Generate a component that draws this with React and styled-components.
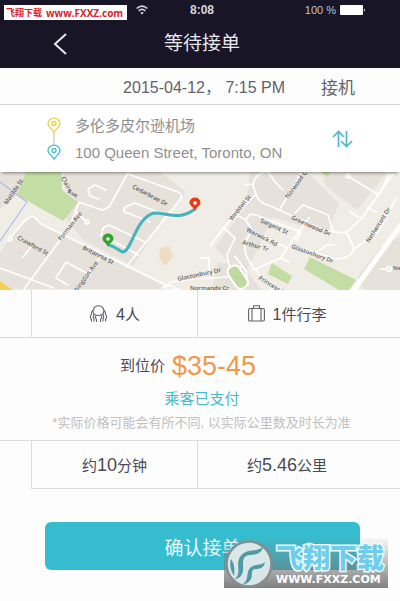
import React from 'react';
import styled, { createGlobalStyle } from 'styled-components';

const GlobalStyle = createGlobalStyle`
  * {
    box-sizing: border-box;
  }

  body {
    margin: 0;
    background: #fdfdfd;
    color: #4a4a55;
    font-family: 'Liberation Sans', 'Noto Sans CJK SC', sans-serif;
  }
`;

const Page = styled.div`
  position: relative;
  padding-bottom: 31px;
`;

const Header = styled.header`
  background: #171526;
  color: #e8e8ee;
`;

const StatusBar = styled.div`
  display: grid;
  grid-template-columns: 54px auto 1fr;
  align-items: center;
  height: 20px;
  padding: 0 34px 0 136px;
  font-size: 12px;
`;

const Clock = styled.span`
  font-weight: 700;
  color: #d5d5dd;
`;

const Battery = styled.div`
  display: flex;
  align-items: center;
  justify-content: flex-end;
  gap: 4px;
  font-size: 11px;
  white-space: nowrap;
  color: #c4c4cc;
`;

const NavBar = styled.div`
  display: grid;
  grid-template-columns: 45px 1fr 45px;
  align-items: center;
  height: 48px;
  padding: 0 35px 0 39px;
`;

const BackButton = styled.button`
  display: flex;
  padding: 12px 14px;
  border: 0;
  background: none;
  color: inherit;
  cursor: pointer;
`;

const Title = styled.h1`
  margin: 0;
  font-size: 19px;
  font-weight: 400;
  line-height: 24px;
  text-align: center;
`;

const DateRow = styled.div`
  display: flex;
  justify-content: flex-end;
  align-items: center;
  gap: 36px;
  height: 37px;
  padding-right: 45px;
  border-bottom: 1px solid #d4d4d4;
  font-size: 16px;
  color: #62636b;
`;

const TripType = styled.span`
  font-size: 17px;
`;

const Route = styled.section`
  position: relative;
  display: flex;
  align-items: center;
  height: 67px;
  padding: 0 47px;
  background: #fff;
  box-shadow: 0 3px 3px -2px rgba(0, 0, 0, 0.45);
`;

const Places = styled.div`
  flex: 1;
  display: flex;
  flex-direction: column;
  padding-left: 14px;
  font-size: 15px;
  line-height: 27px;
  color: #8f8f8f;
`;

const SwapButton = styled.button`
  display: flex;
  padding: 0;
  border: 0;
  background: none;
  cursor: pointer;
`;

const Map = styled.svg`
  display: block;
  width: 100%;
  height: 118px;
`;

const Cells = styled.div`
  display: grid;
  grid-template-columns: 31fr 166fr 203fr;
  height: ${props => (props.$top ? '49px' : '48px')};
  border-top: ${props => (props.$top ? '1px solid #dcdcdc' : '0')};
  border-bottom: ${props => (props.$top ? '0' : '1px solid #dcdcdc')};
`;

const Cell = styled.div`
  display: flex;
  align-items: center;
  justify-content: center;
  gap: 8px;
  padding-right: ${props => (props.$last ? '24px' : '0')};
  border-left: 1px solid #dcdcdc;
  border-bottom: ${props => (props.$underlined ? '1px solid #dcdcdc' : '0')};
  font-size: 15px;
`;

const Amount = styled.span`
  font-size: ${props => (props.$large ? '18px' : '16px')};
`;

const PriceBox = styled.section`
  display: flex;
  flex-direction: column;
  align-items: center;
  padding: 11px 0 5px;
`;

const PriceLine = styled.div`
  display: flex;
  align-items: center;
  gap: 7px;
  padding-right: 24px;
  font-size: 15px;
  line-height: 34px;
`;

const Price = styled.strong`
  font-size: 27px;
  font-weight: 400;
  color: #f0984a;
`;

const Paid = styled.p`
  margin: 4px 0 0;
  padding-left: 4px;
  font-size: 15px;
  line-height: 24px;
  color: #43bccb;
`;

const Note = styled.p`
  margin: 0;
  padding-left: 3px;
  font-size: 13px;
  line-height: 24px;
  color: #c0c0c0;
`;

const Actions = styled.div`
  padding: 33px 40px 0 45px;
`;

const ConfirmButton = styled.button`
  width: 100%;
  height: 48px;
  border: 0;
  border-radius: 6px;
  background: #35bdcf;
  color: #eefafc;
  font-family: inherit;
  font-size: 19px;
  cursor: pointer;
`;

const SiteTag = styled.div`
  position: absolute;
  top: 5px;
  left: 4px;
  display: flex;
  align-items: center;
  gap: 4px;
  height: 15px;
  padding: 0 4px 0 2px;
  background: #fff;
  color: #d8232a;
  font-family: 'Noto Sans CJK SC', sans-serif;
  font-size: 9px;
  font-weight: 700;
  white-space: nowrap;
`;

const SiteUrl = styled.span`
  font-family: 'Open Sans', sans-serif;
  font-size: 10px;
`;

const SiteBadge = styled.div`
  position: absolute;
  right: 12px;
  bottom: 13px;
  display: flex;
  align-items: center;
  height: 50px;
  width: 164px;
  background: linear-gradient(rgba(150, 150, 150, 0.05), rgba(115, 115, 115, 0.9));
  pointer-events: none;
`;

const BadgeText = styled.div`
  display: flex;
  flex-direction: column;
  padding: 2px 0 0 3px;
  white-space: nowrap;
`;

const BadgeName = styled.span`
  font-family: 'Noto Sans CJK SC', sans-serif;
  font-size: 27px;
  font-weight: 900;
  line-height: 32px;
  color: #6fcdec;
  -webkit-text-stroke: 3px #effafd;
  paint-order: stroke fill;
`;

const BadgeUrl = styled.span`
  font-family: 'DejaVu Sans', sans-serif;
  font-size: 11px;
  font-weight: 700;
  line-height: 14px;
  color: #fff;
`;

const streetNames = [
  { x: 7, y: 205, angle: -56, name: 'Matilda St' },
  { x: 61, y: 178, angle: 62, name: 'Claire' },
  { x: 67, y: 193, angle: 28, name: 'Ave' },
  { x: 132, y: 188, angle: 28, name: 'Cedarbrae Dr' },
  { x: 61, y: 241, angle: -52, name: 'Forman Ave' },
  { x: 17, y: 239, angle: 29, name: 'Crawford St' },
  { x: 82, y: 249, angle: 27, name: 'Britannia St' },
  { x: 75, y: 295, angle: -54, name: 'Abingdon Ave' },
  { x: 178, y: 281, angle: -12, name: 'Glastonbury Dr' },
  { x: 190, y: 290, angle: 0, name: 'Normandy Cr' },
  { x: 288, y: 199, angle: -54, name: 'Norwood Cr' },
  { x: 232, y: 221, angle: -51, name: 'Weddell St' },
  { x: 260, y: 222, angle: 25, name: 'Sargent St' },
  { x: 291, y: 219, angle: 24, name: 'Greenwood Dr' },
  { x: 246, y: 231, angle: 27, name: 'Warwick Rd' },
  { x: 242, y: 244, angle: 16, name: 'Arthur Tr' },
  { x: 291, y: 248, angle: 20, name: 'Glastonbury Dr' },
  { x: 258, y: 279, angle: 32, name: 'Princess St' },
  { x: 369, y: 243, angle: -57, name: 'Nethercott Dr' },
  { x: 393, y: 270, angle: 0, name: 'Nelson' },
];

const PlacePin = ({ y, color }) => (
  <g fill="none" stroke={color} strokeWidth="1.3">
    <path d={`M7 ${y + 14}C3 ${y + 9} 1 ${y + 8} 1 ${y + 5.7}a6 5.5 0 0 1 12 0c0 2.3-2 3.3-6 8.3z`} />
    <circle cx="7" cy={y + 5.5} r="2" />
  </g>
);

const MapPin = ({ x, y, color, dot }) => (
  <g transform={`translate(${x} ${y})`}>
    <path d="M0 0C-1-4-5.500-5-5.500-8.500a5.500 5 0 0 1 11 0C5.500-5 1-4 0 0z" fill={color} />
    <circle cy="-8" r="1.800" fill={dot} />
  </g>
);

const RouteMap = () => (
  <Map viewBox="0 172 400 118" preserveAspectRatio="xMidYMid slice" role="img" aria-label="Route map">
    <rect y="172" width="400" height="118" fill="#f0ede6" />
    <g fill="#e6e1da">
      <path d="M0 172h26l-9 23-17 14z" />
      <path d="M62 172h98l26 20-24 27-29 47-50-26-19-24 14-14z" />
      <path d="M10 238l22-22 10 8 128 65H0v-36z" />
      <path d="M250 172h57l32 32-12 30-54-17-30 61-28-31 32-42z" />
      <path d="M322 172h65l-30 38-31-24z" />
      <path d="M400 236l-20 12-22 28 6 14h36z" />
      <path d="M218 262l24 4 20 24h-50z" />
    </g>
    <g fill="#c4dda4">
      <path d="M26 172l-9 23 46 26 15-19-16-12v-18z" />
      <path d="M310 257l46 23-7 10h-10l-35-21z" />
      <path d="M272 263l20 13-4 8-20-10z" />
      <path d="M321 172h9l-2 5z" />
    </g>
    <path d="M160 248l9-2 4 10-8 10-6-8z" fill="#eddcc4" />
    <path d="M0 281l13 9H0z" fill="#f5cf57" />
    <path d="M0 182l27 20-27 39" fill="none" stroke="#a9bfe6" strokeWidth="1.200" />

    <g fill="none" stroke="#fff" strokeWidth="1.700" strokeLinecap="round" strokeLinejoin="round">
      <path d="M10 238l15-18 8-4 8 8 88 43 41 20 10 3M24 289l45-61 10-26 23 8 7-3 19-34" />
      <path d="M75 211l12 11M128 174l50 18q6 3 1 9l-53 66" />
      <path d="M150 222l-22-9q-6 0-3-6l10-4 25 10M101 236l2-8 6-3 36 17M108 238l30 17" />
      <path d="M100 257l-24 33M32 246l-9 11M68 285l-12-7 10-16 24 13M0 268l54 20" />
      <path d="M106 190l-11-5-7 4 2 7 9 3" />
      <path d="M210 246l15-20 31-32-3-8q2-14 15-14l8 11 7 7M256 194q3 9 12 11l58 26 20 2 16-15 31-44" />
      <path d="M302 172l-22 37M233 213l13 7 4-6 6 1 45 17-4 8M246 221l7 10 34 17 22-30" />
      <path d="M295 213l8-8 25 10 5 16M224 228l11 10-8 17 2 10q2 14 15 20h4l-2-14-11-15" />
      <path d="M249 235q-10 14 4 32l20 23M287 248l-6 10-28 12M281 258l8 4M200 258h9v14" />
      <path d="M346 231q5 10 8 18l25-18 17-33M354 249q-4 10-18 10l-40-12M313 255l14-10h7" />
      <path d="M351 178l28 17 10-20M368 208l8 4M350 212l8 5M200 279l27-2 14-10" />
      <path d="M245 185l8-1M390 269h-10M162 288l10-6 24-3" />
    </g>
    <path d="M403 222l-52 72" stroke="#fff" strokeWidth="5" />
    <rect x="231" y="265" width="13" height="25" rx="6" fill="#bfd99e" stroke="#fff" strokeWidth="2" transform="rotate(-34 237 277)" />
    <g fill="#f0ede6" stroke="#fff" strokeWidth="1.500">
      <circle cx="10" cy="239" r="2" />
      <circle cx="87" cy="222" r="2" />
      <circle cx="348" cy="176" r="2" />
      <circle cx="389" cy="269" r="2.500" />
      <ellipse cx="170" cy="288" rx="5" ry="2" />
    </g>

    <g fill="#5e5d5a" fontFamily="'Open Sans', sans-serif" fontSize="6" fontWeight="600">
      {streetNames.map((street, i) => (
        <text key={i} transform={`translate(${street.x} ${street.y}) rotate(${street.angle})`}>
          {street.name}
        </text>
      ))}
    </g>

    <path
      d="M109 245C116 247 119 251 123 252C132 251 135 218 154 213C168 213 179 221 195 209"
      fill="none"
      stroke="#45b3bd"
      strokeWidth="3"
      strokeLinecap="round"
    />
    <MapPin x={108} y={247} color="#35a12e" dot="#e6f6df" />
    <MapPin x={195} y={211} color="#df3f16" dot="#fff" />
  </Map>
);

const App = () => (
  <>
    <GlobalStyle />
    <Page>
      <Header>
        <StatusBar>
          <svg width="12" height="10" viewBox="0 0 12 10" fill="none" stroke="#d5d5dd" strokeWidth="1.600">
            <path d="M.6 3.500q5.400-4.600 10.800 0M2.600 5.800q3.400-2.800 6.800 0" />
            <path d="M6 9.600L4.200 7.700q1.800-1.300 3.600 0z" fill="#d5d5dd" stroke="none" />
          </svg>
          <Clock>8:08</Clock>
          <Battery>
            100 %
            <svg width="26" height="10" viewBox="0 0 26 10">
              <rect width="23" height="10" rx="1" fill="#fff" />
              <path d="M24 3.500q2 1.500 0 3z" fill="#fff" />
            </svg>
          </Battery>
        </StatusBar>
        <NavBar>
          <BackButton aria-label="返回">
            <svg width="14" height="22" viewBox="0 0 14 22" fill="none" stroke="currentColor" strokeWidth="2">
              <path d="M13 1L2 11l11 10" />
            </svg>
          </BackButton>
          <Title>等待接单</Title>
        </NavBar>
      </Header>

      <DateRow>
        <time dateTime="2015-04-12T19:15">2015-04-12， 7:15 PM</time>
        <TripType>接机</TripType>
      </DateRow>

      <Route>
        <svg width="14" height="44" viewBox="0 0 14 44">
          <path d="M7 15v14" stroke="#bbb" />
          <PlacePin y={1} color="#ecd04a" />
          <PlacePin y={28} color="#45bccb" />
        </svg>
        <Places>
          <span>多伦多皮尔逊机场</span>
          <span>100 Queen Street, Toronto, ON</span>
        </Places>
        <SwapButton aria-label="交换地点">
          <svg width="21" height="18" viewBox="0 0 21 18" fill="none" stroke="#50b9c6" strokeWidth="1.700">
            <path d="M6.500 17V1.500M1 7l5.500-5.500L12 7M14.500 1v15.500M9 11l5.500 5.500L20 11" />
          </svg>
        </SwapButton>
      </Route>

      <RouteMap />

      <Cells>
        <span />
        <Cell>
          <svg width="19" height="18" viewBox="0 0 19 18" fill="none" stroke="#62626c" strokeWidth="1.100">
            <path d="M4 5.500C5 2 7 .8 9.500.8S14 2 15 5.500c0 3-2.500 5-5.500 5S4 8.500 4 5.500z" />
            <path d="M4 5.500C1.500 7 3.500 9 1.500 11c-1 2 1.500 2 1 5.500M4.500 9c1 2-1 2.500 0 4 1 1.500.5 2 .5 3.500M7.500 10.500c-2 1-1.500 2-.5 3 .7 1 .5 2 .5 3.500" />
            <path d="M15 5.500c2.500 1.500.5 3.500 2.500 5.500 1 2-1.500 2-1 5.500M14.500 9c-1 2 1 2.500 0 4-1 1.500-.5 2-.5 3.500M11.500 10.500c2 1 1.500 2 .5 3-.7 1-.5 2-.5 3.500" />
          </svg>
          <span><Amount>4</Amount>人</span>
        </Cell>
        <Cell $last>
          <svg width="17" height="17" viewBox="0 0 17 17" fill="none" stroke="#62626c" strokeWidth="1.100">
            <rect x=".6" y="3.500" width="15.800" height="12.500" rx="1.200" />
            <path d="M5.500 3.500V.8h6v2.700M4 3.500V16M13 3.500V16" />
          </svg>
          <span><Amount>1</Amount>件行李</span>
        </Cell>
      </Cells>

      <PriceBox>
        <PriceLine>
          <span>到位价</span>
          <Price>$35-45</Price>
        </PriceLine>
        <Paid>乘客已支付</Paid>
        <Note>*实际价格可能会有所不同, 以实际公里数及时长为准</Note>
      </PriceBox>

      <Cells $top>
        <span />
        <Cell $underlined>
          <span>约<Amount $large>10</Amount>分钟</span>
        </Cell>
        <Cell $last $underlined>
          <span>约<Amount $large>5.46</Amount>公里</span>
        </Cell>
      </Cells>

      <Actions>
        <ConfirmButton>确认接单</ConfirmButton>
      </Actions>

      <SiteTag>
        <span>飞翔下载</span>
        <SiteUrl>www.FXXZ.com</SiteUrl>
      </SiteTag>
      <SiteBadge>
        <svg width="49" height="49" viewBox="0 0 49 49">
          <circle cx="25" cy="25" r="22.500" fill="#d9e7e8" stroke="#858e90" strokeWidth="2.500" />
          <path d="M10 40C20 35 8 22 20 14c6-4 12-1 19-6-1 6-7 8-13 8-10 1-6 10-7 16-1 5-4 8-9 8z" fill="#4f9aa3" />
          <path d="M19 45c7-5 2-12 8-17 4-3 9-1 14-5-1 5-4 7-9 7-6 0-3 6-5 10-2 3-4 5-8 5z" fill="#4f9aa3" />
          <path d="M7 20c3 4 4 10 3 17-3-5-5-11-3-17z" fill="#4f9aa3" />
        </svg>
        <BadgeText>
          <BadgeName>飞翔下载</BadgeName>
          <BadgeUrl>WWW.FXXZ.COM</BadgeUrl>
        </BadgeText>
      </SiteBadge>
    </Page>
  </>
);

export default App;
